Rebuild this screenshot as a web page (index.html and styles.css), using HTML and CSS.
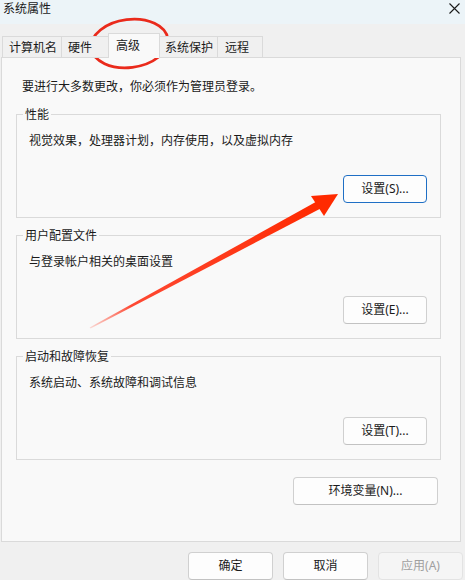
FILE: index.html
```html
<!DOCTYPE html>
<html lang="zh-CN">
<head>
<meta charset="utf-8">
<title>系统属性</title>
<link rel="stylesheet" href="styles.css">
</head>
<body>
<div class="window">
  <div class="titlebar">
    <span class="title">系统属性</span>
    <svg class="close" width="11" height="11" viewBox="0 0 11 11"><path d="M0.5 0.5L10.5 10.5M10.5 0.5L0.5 10.5" stroke="#1a1a1a" stroke-width="1.1" fill="none"/></svg>
  </div>
  <div class="tabs">
    <div class="tab t1">计算机名</div>
    <div class="tab t2">硬件</div>
    <div class="tab t3 active">高级</div>
    <div class="tab t4">系统保护</div>
    <div class="tab t5">远程</div>
  </div>
  <div class="panel">
    <p class="note">要进行大多数更改，你必须作为管理员登录。</p>
    <div class="group">
      <div class="legend">性能</div>
      <p class="desc">视觉效果，处理器计划，内存使用，以及虚拟内存</p>
      <div class="row"><button class="btn focus">设置(S)...</button></div>
    </div>
    <div class="group">
      <div class="legend">用户配置文件</div>
      <p class="desc">与登录帐户相关的桌面设置</p>
      <div class="row"><button class="btn">设置(E)...</button></div>
    </div>
    <div class="group">
      <div class="legend">启动和故障恢复</div>
      <p class="desc">系统启动、系统故障和调试信息</p>
      <div class="row"><button class="btn">设置(T)...</button></div>
    </div>
    <div class="envrow"><button class="btn env">环境变量(N)...</button></div>
  </div>
  <div class="footer">
    <button class="btn foot">确定</button>
    <button class="btn foot">取消</button>
    <button class="btn foot disabled">应用(A)</button>
  </div>
</div>
<svg class="overlay" width="465" height="580" viewBox="0 0 465 580">
  <defs>
    <linearGradient id="shaft" gradientUnits="userSpaceOnUse" x1="90" y1="328" x2="320" y2="205">
      <stop offset="0" stop-color="#ff2a10" stop-opacity="0.15"/>
      <stop offset="0.18" stop-color="#ff2a10" stop-opacity="0.85"/>
      <stop offset="1" stop-color="#ff2a00" stop-opacity="1"/>
    </linearGradient>
  </defs>
  <ellipse cx="129.5" cy="43.5" rx="38.5" ry="24" transform="rotate(-7 129.5 43.5)" fill="none" stroke="#ea2a1b" stroke-width="2.8"/>
  <polygon points="316.6,201.6 320.6,208.6 90.6,328.6 89.6,327.6" fill="url(#shaft)"/>
  <polygon points="338,194 311,196 324,216" fill="#ff2a00"/>
</svg>
</body>
</html>
```

FILE: styles.css
```css
html, body {
  margin: 0;
  padding: 0;
}
body {
  width: 465px;
  height: 580px;
  overflow: hidden;
  background: #f0f0f0;
  font-family: "Noto Sans", "Noto Sans CJK SC", sans-serif;
  font-size: 12px;
  color: #1a1a1a;
  position: relative;
}
.window {
  width: 465px;
  height: 580px;
}
.titlebar {
  height: 24px;
  background: #ecf4f8;
  display: flex;
  justify-content: space-between;
  align-items: flex-start;
  padding-left: 3px;
  box-sizing: border-box;
}
.title {
  line-height: 16px;
  font-family: "Noto Sans CJK SC", sans-serif;
}
.close {
  margin-top: 3px;
  margin-right: 5px;
}
.tabs {
  display: flex;
  align-items: flex-end;
  height: 34px;
  padding-left: 2px;
  box-sizing: border-box;
  margin-bottom: -1px;
  position: relative;
  z-index: 1;
}
.tab {
  height: 22px;
  box-sizing: border-box;
  border: 1px solid #dadada;
  background: #f0f0f0;
  line-height: 20px;
  font-family: "Noto Sans CJK SC", sans-serif;
  margin-left: -1px;
  position: relative;
}
.t1 { width: 60px; padding-left: 6px; margin-left: 0; }
.t2 { width: 48px; padding-left: 6px; }
.t3 { width: 52px; padding-left: 7px; }
.t4 { width: 59px; padding-left: 5px; }
.t5 { width: 46px; padding-left: 7px; }
.tab.active {
  height: 25px;
  background: #f9f9f9;
  border-bottom: none;
  line-height: 21px;
  z-index: 2;
}
.panel {
  margin-left: 1px;
  width: 460px;
  height: 485px;
  box-sizing: border-box;
  border: 1px solid #dadada;
  background: #f9f9f9;
  padding-top: 20px;
}
.note {
  margin: 0 0 0 20px;
  line-height: 16px;
  font-family: "Noto Sans CJK SC", sans-serif;
}
.group {
  margin: 20px 0 0 14px;
  width: 425px;
  height: 104px;
  box-sizing: border-box;
  border: 1px solid #dadada;
  padding: 0 13px 0 12px;
}
.group + .group {
  margin-top: 17px;
}
.legend {
  width: max-content;
  margin: -9px 0 0 -6px;
  padding: 0 2px;
  background: #f9f9f9;
  line-height: 16px;
  font-family: "Noto Sans CJK SC", sans-serif;
}
.desc {
  margin: 10px 0 0 0;
  line-height: 16px;
  font-family: "Noto Sans CJK SC", sans-serif;
}
.row {
  margin-top: 27px;
  display: flex;
  justify-content: flex-end;
}
.btn {
  width: 84px;
  height: 28px;
  box-sizing: border-box;
  border: 1px solid #d0d0d0;
  border-bottom-color: #c2c2c2;
  border-radius: 4px;
  background: #fdfdfd;
  font-family: "Noto Sans", "Noto Sans CJK SC", sans-serif;
  font-size: 12px;
  color: #1a1a1a;
  padding: 0;
  line-height: 26px;
  text-align: center;
}
.btn.focus {
  border-color: #1f6fc5;
}
.envrow {
  margin-top: 17px;
  display: flex;
  justify-content: flex-end;
  padding-right: 22px;
}
.btn.env {
  width: 145px;
}
.footer {
  display: flex;
  justify-content: flex-end;
  gap: 10px;
  padding-top: 10px;
  padding-right: 2px;
}
.btn.foot {
  width: 85px;
}
.btn.disabled {
  background: #f5f5f5;
  border-color: #e3e3e3;
  color: #a0a0a0;
}
.overlay {
  position: absolute;
  left: 0;
  top: 0;
  pointer-events: none;
}
```
